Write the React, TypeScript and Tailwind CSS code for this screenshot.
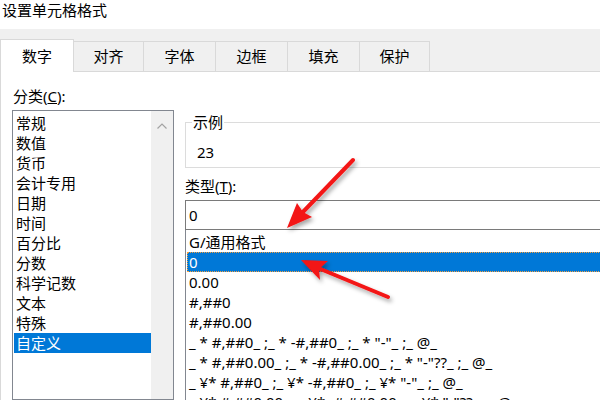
import React from 'react';

const FONT = { fontFamily: '"Noto Sans", "Noto Sans CJK SC", sans-serif' };

const categories = ['常规', '数值', '货币', '会计专用', '日期', '时间', '百分比', '分数', '科学记数', '文本', '特殊', '自定义'];

const formats = [
  'G/通用格式',
  '0',
  '0.00',
  '#,##0',
  '#,##0.00',
  '_ * #,##0_ ;_ * -#,##0_ ;_ * "-"_ ;_ @_',
  '_ * #,##0.00_ ;_ * -#,##0.00_ ;_ * "-"??_ ;_ @_',
  '_ ¥* #,##0_ ;_ ¥* -#,##0_ ;_ ¥* "-"_ ;_ @_',
  '_ ¥* #,##0.00_ ;_ ¥* -#,##0.00_ ;_ ¥* "-"??_ ;_ @_',
];

const tabs = [
  { label: '对齐', w: 'w-[70px]' },
  { label: '字体', w: 'w-[72px]' },
  { label: '边框', w: 'w-[72px]' },
  { label: '填充', w: 'w-[72px]' },
  { label: '保护', w: 'w-[70px]' },
];

const Arrows = () => (
  <svg className="absolute inset-0 pointer-events-none" width="600" height="400" viewBox="0 0 600 400">
    <defs>
      <filter id="sh" x="-20%" y="-20%" width="140%" height="140%">
        <feDropShadow dx="2" dy="3" stdDeviation="2" floodColor="#000" floodOpacity="0.35" />
      </filter>
    </defs>
    <g filter="url(#sh)" fill="#f31414" stroke="#f31414" strokeLinecap="round">
      <line x1="353" y1="160" x2="301" y2="214" strokeWidth="4" />
      <polygon points="287,228 297,203 303,212 312,217" stroke="none" />
      <line x1="388" y1="297" x2="318" y2="268" strokeWidth="4" />
      <polygon points="301,260 328,261 319,269 320,280" stroke="none" />
    </g>
  </svg>
);

export default function App() {
  return (
    <div className="relative w-[600px] h-[400px] overflow-hidden bg-white text-[15px] text-black" style={FONT}>
      <div className="h-[29px] pl-[2px] leading-[20px]">设置单元格格式</div>

      <div className="h-[43px] bg-[#f0f0f0] border-b border-[#d9d9d9] flex items-end">
        <div className="w-[74px] h-[33px] -mb-px bg-white border border-b-0 border-[#d9d9d9] flex items-center justify-center">数字</div>
        {tabs.map((t) => (
          <div key={t.label} className={`${t.w} h-[30px] border-t border-r border-[#d9d9d9] flex items-center justify-center`}>
            {t.label}
          </div>
        ))}
      </div>

      <div className="flex border-l border-[#d9d9d9] h-[328px]">
        <div className="ml-[11px] w-[162px] shrink-0 flex flex-col">
          <div className="mt-[14px] shrink-0 leading-[20px] pl-[1px]">分类(<span className="underline">C</span>):</div>
          <div className="mt-[4px] flex-1 min-h-0 flex border border-[#828790]">
            <div className="flex-1 pt-[2px]">
              {categories.map((c, i) => (
                <div
                  key={c}
                  className={`h-[20px] leading-[20px] ml-px pl-[2px] ${i === categories.length - 1 ? 'bg-[#0078d7] text-white' : ''}`}
                >
                  {c}
                </div>
              ))}
            </div>
            <div className="w-[22px] bg-[#f0f0f0] flex justify-center pt-[12px]">
              <svg width="10" height="6" viewBox="0 0 10 6">
                <path d="M0.5 5.5 L5 1 L9.5 5.5" fill="none" stroke="#a3a3a3" strokeWidth="1.2" />
              </svg>
            </div>
          </div>
        </div>

        <div className="ml-[11px] w-[440px] shrink-0 flex flex-col">
          <fieldset className="mt-[40px] shrink-0 border border-[#dcdcdc] pl-[6px] pb-[5px]">
            <legend className="px-[1px] leading-[20px]">示例</legend>
            <div className="mt-[10px] ml-[5px] leading-[20px]">23</div>
          </fieldset>
          <div className="mt-[8px] shrink-0 leading-[20px]">类型(<span className="underline">T</span>):</div>
          <div className="mt-[4px] shrink-0 h-[30px] border border-[#7a7a7a] pl-[3px] flex items-center">0</div>
          <div className="flex-1 min-h-0 overflow-hidden border-l border-[#828790] pt-[2px]">
            {formats.map((f, i) => (
              <div
                key={i}
                className={`h-[20px] leading-[20px] ml-px pl-[2px] whitespace-pre ${i === 1 ? 'bg-[#0078d7] text-white outline-1 outline-dotted -outline-offset-1 outline-[#f5a040]' : ''}`}
              >
                {f}
              </div>
            ))}
          </div>
        </div>
      </div>

      <Arrows />
    </div>
  );
}
